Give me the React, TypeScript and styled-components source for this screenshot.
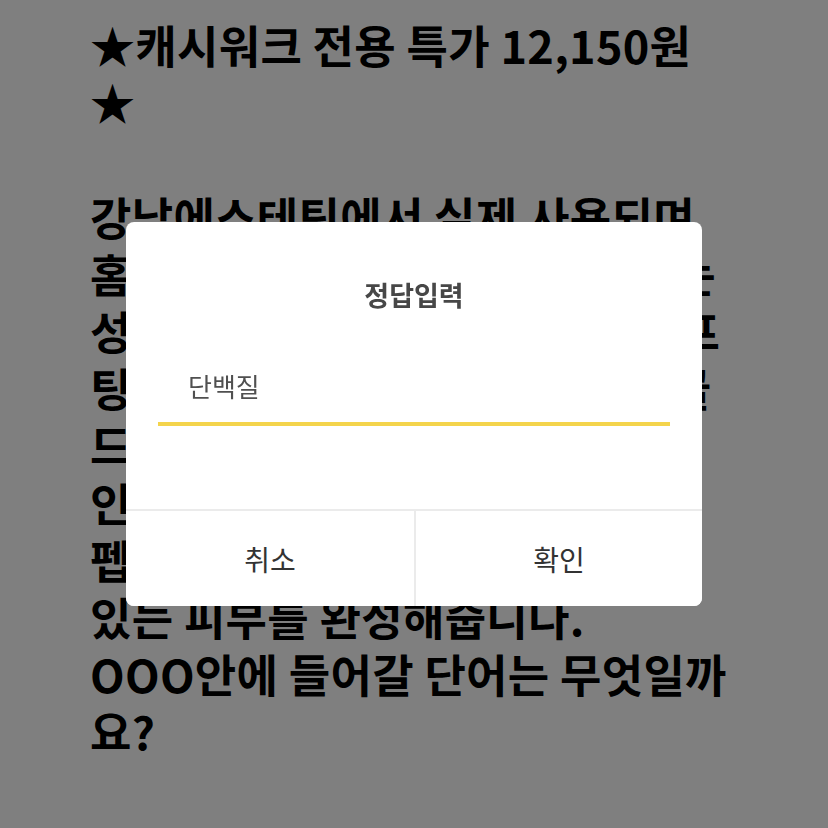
import * as React from 'react';
import styled, { createGlobalStyle } from 'styled-components';

const GlobalStyle = createGlobalStyle`
  html, body {
    margin: 0;
    padding: 0;
    background: #ffffff;
  }
  body {
    font-family: "Noto Sans CJK KR", "Noto Sans", sans-serif;
  }
`;

const Page = styled.main`
  min-height: 828px;
  padding: 16px 10px 0 90px;
  box-sizing: border-box;
`;

const Article = styled.p`
  margin: 0;
  font-size: 45px;
  font-weight: 700;
  line-height: 57.2px;
  color: #000000;
  letter-spacing: 0.3px;
`;

const Overlay = styled.div`
  position: fixed;
  inset: 0;
  background: rgba(0, 0, 0, 0.5);
  display: flex;
  align-items: center;
  justify-content: center;
`;

const Dialog = styled.div`
  width: 576px;
  background: #ffffff;
  border-radius: 8px;
  display: flex;
  flex-direction: column;
  overflow: hidden;
`;

const Title = styled.h2`
  margin: 55px 0 0;
  font-size: 27px;
  font-weight: 700;
  line-height: 36px;
  text-align: center;
  color: #474747;
`;

const AnswerInput = styled.input`
  display: block;
  margin: 35px 32px 0;
  height: 78px;
  padding: 0 0 0 30px;
  box-sizing: border-box;
  border: none;
  border-bottom: 4px solid #f4d44c;
  outline: none;
  background: transparent;
  font-family: "Noto Sans CJK KR", "Noto Sans", sans-serif;
  font-size: 26px;
  color: #505050;
`;

const Footer = styled.div`
  margin-top: 83px;
  height: 97px;
  display: grid;
  grid-template-columns: 1fr 1fr;
  border-top: 2px solid #ebebeb;
  box-sizing: border-box;
`;

const FooterButton = styled.button<{ divider?: boolean }>`
  border: none;
  border-left: ${({ divider }) => (divider ? '2px solid #ebebeb' : 'none')};
  background: #ffffff;
  font-family: "Noto Sans CJK KR", "Noto Sans", sans-serif;
  font-size: 28px;
  font-weight: 400;
  color: #333333;
  cursor: pointer;
  padding: 0;
`;

export default function App() {
  const [answer, setAnswer] = React.useState('단백질');

  return (
    <>
      <GlobalStyle />
      <Page>
        <Article>
          ★캐시워크 전용 특가 12,150원
          <br />★
          <br />
          <br />
          강남에스테틱에서 실제 사용되며
          <br />
          홈케어 앰플로 피부 탄력을 높이는
          <br />
          성분인 아데노신과 히알루론, 리프
          <br />
          팅 효과와 함께, 순도 높은 24K 골
          <br />
          드 성분이 들어있어 촉촉하고
          <br />
          인 피부로 가꾸어주며 특히
          <br />
          펩타이드 성분이 함유되어 생기
          <br />
          있는 피부를 완성해줍니다.
          <br />
          OOO안에 들어갈 단어는 무엇일까
          <br />
          요?
        </Article>
      </Page>
      <Overlay>
        <Dialog>
          <Title>정답입력</Title>
          <AnswerInput value={answer} onChange={(e) => setAnswer(e.target.value)} />
          <Footer>
            <FooterButton>취소</FooterButton>
            <FooterButton divider>확인</FooterButton>
          </Footer>
        </Dialog>
      </Overlay>
    </>
  );
}
